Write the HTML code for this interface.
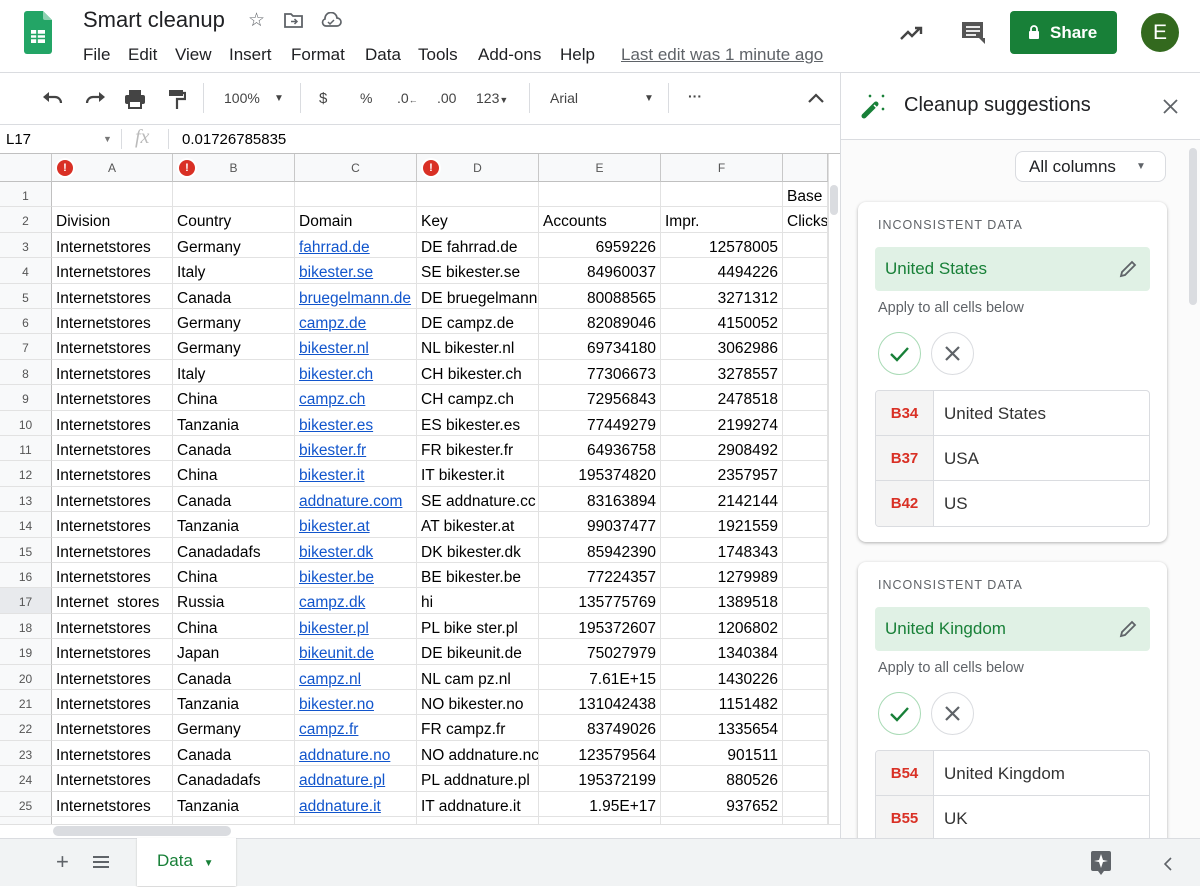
<!DOCTYPE html>
<html><head><meta charset="utf-8"><style>
*{box-sizing:border-box;margin:0;padding:0}
body{width:1200px;height:886px;overflow:hidden;background:#fff;font-family:"Liberation Sans",Arial,sans-serif;position:relative;color:#000}
.abs{position:absolute}
.menu span{position:absolute;top:0;white-space:nowrap}
.tb{position:absolute;top:90px;font-size:14px;color:#444}
#grid{position:absolute;left:0;top:154px;width:828px;height:670px;overflow:hidden}
.hdr{position:absolute;top:0;height:28px;background:#f8f9fa;border-right:1px solid #c8c8c8;border-bottom:1px solid #c0c0c0;font-size:12px;color:#555;text-align:center;line-height:28px}
.row{position:absolute;left:0;height:25.4px;width:828px}
.c{position:absolute;top:0;height:100%;border-right:1px solid #e2e2e2;border-bottom:1px solid #e2e2e2;font-size:15.5px;line-height:25px;padding:2px 4px 0;white-space:nowrap;overflow:hidden}
.rh{background:#f8f9fa;color:#555;font-size:12px;text-align:center;border-right:1px solid #c0c0c0}
.r{text-align:right}
.l{color:#1155cc;text-decoration:underline}
.err{position:absolute;top:6px;width:16px;height:16px;border-radius:50%;background:#d93025;color:#fff;font-size:11px;font-weight:bold;line-height:16px;text-align:center;box-shadow:0 0 0 2px #fff}
.card{position:absolute;left:858px;width:309px;background:#fff;border-radius:8px;box-shadow:0 1px 3px rgba(0,0,0,.3)}
.cap{position:absolute;left:20px;font-size:12.5px;letter-spacing:1px;color:#5f6368}
.sug{position:absolute;left:17px;width:275px;height:44px;background:#e0f1e5;border-radius:4px;color:#188038;font-size:17px;line-height:44px;padding-left:10px}
.app{position:absolute;left:20px;font-size:14.5px;color:#5f6368}
.btn{position:absolute;width:43px;height:43px;border-radius:50%;border:1px solid #dadce0}
.lst{position:absolute;left:17px;width:275px;border:1px solid #dadce0;border-radius:4px;overflow:hidden}
.li{height:45px;border-bottom:1px solid #dadce0;display:flex}
.li b{width:58px;background:#f4f4f4;border-right:1px solid #dadce0;color:#d93025;font-size:15px;text-align:center;line-height:45px}
.li span{padding-left:10px;font-size:17px;color:#333;line-height:45px}
</style></head><body>
<svg class="abs" style="left:24px;top:11px" width="28" height="43" viewBox="0 0 28 43"><path d="M3 0h16l9 9v31a3 3 0 0 1-3 3H3a3 3 0 0 1-3-3V3a3 3 0 0 1 3-3z" fill="#23a566"/><path d="M19 0l9 9h-7a2 2 0 0 1-2-2z" fill="#8ed1b1"/><rect x="7" y="19" width="14" height="13" fill="#fff"/><path d="M7 23.5h14M7 27.5h14M13 19v13" stroke="#23a566" stroke-width="1.6"/></svg>
<div class="abs" style="left:83px;top:7px;font-size:22px;color:#202124">Smart cleanup</div>
<div class="abs" style="left:248px;top:9px;font-size:19px;color:#5f6368">☆</div>
<svg class="abs" style="left:284px;top:12px" width="20" height="16"><path d="M1 2h6l2 2h9v11H1z" fill="none" stroke="#5f6368" stroke-width="1.8"/><path d="M7 9.5h6M10.5 7l2.5 2.5-2.5 2.5" fill="none" stroke="#5f6368" stroke-width="1.5"/></svg>
<svg class="abs" style="left:320px;top:12px" width="22" height="16"><path d="M6 14h11a4 4 0 0 0 0-8A6 6 0 0 0 5 7a3.6 3.6 0 0 0 1 7z" fill="none" stroke="#5f6368" stroke-width="1.7"/><path d="M8 10l2 2 4-4" fill="none" stroke="#5f6368" stroke-width="1.5"/></svg>
<div class="abs menu" style="left:0;top:45px;font-size:17px;color:#202124"><span style="left:83px">File</span><span style="left:128px">Edit</span><span style="left:175px">View</span><span style="left:229px">Insert</span><span style="left:291px">Format</span><span style="left:365px">Data</span><span style="left:418px">Tools</span><span style="left:478px">Add-ons</span><span style="left:560px">Help</span></div>
<div class="abs" style="left:621px;top:45px;font-size:17px;color:#5f6368;text-decoration:underline">Last edit was 1 minute ago</div>
<svg class="abs" style="left:899px;top:24px" width="26" height="18"><path d="M2 15l7-7 4 4 8-8M16 4h6v6" fill="none" stroke="#444" stroke-width="2.4"/></svg>
<svg class="abs" style="left:961px;top:21px" width="24" height="24"><path d="M1 1h21v16h2l0 6-6-6H1z" fill="#555"/><path d="M5 6h14M5 10h14M5 14h10" stroke="#fff" stroke-width="1.8"/></svg>
<div class="abs" style="left:1010px;top:11px;width:107px;height:43px;background:#188038;border-radius:4px;color:#fff;font-size:17px;line-height:43px;padding-left:40px;font-weight:bold">Share</div>
<svg class="abs" style="left:1028px;top:25px" width="12" height="14"><rect x="1" y="6" width="10" height="8" rx="1" fill="#fff"/><path d="M3 6V4a3 3 0 0 1 6 0v2" fill="none" stroke="#fff" stroke-width="1.8"/></svg>
<div class="abs" style="left:1141px;top:13px;width:38px;height:39px;border-radius:50%;background:#33691e;color:#fff;font-size:21px;text-align:center;line-height:39px">E</div>
<div class="abs" style="left:0;top:72px;width:1200px;height:1px;background:#dadce0"></div>
<svg class="abs" style="left:42px;top:91px" width="22" height="14"><path d="M4 6h9a6 6 0 0 1 6 6" fill="none" stroke="#444" stroke-width="2.2"/><path d="M1 6l6-5v10z" fill="#444"/></svg>
<svg class="abs" style="left:84px;top:91px" width="22" height="14"><path d="M18 6H9a6 6 0 0 0-6 6" fill="none" stroke="#444" stroke-width="2.2"/><path d="M21 6l-6-5v10z" fill="#444"/></svg>
<svg class="abs" style="left:124px;top:89px" width="22" height="20"><rect x="5" y="1" width="12" height="5" fill="#444"/><rect x="1" y="6" width="20" height="9" rx="2" fill="#444"/><rect x="5" y="12" width="12" height="7" fill="#fff" stroke="#444" stroke-width="2"/></svg>
<svg class="abs" style="left:168px;top:89px" width="18" height="21"><rect x="1" y="1" width="14" height="6" fill="#444"/><path d="M15 4h2v6H9v10" fill="none" stroke="#444" stroke-width="2.2"/></svg>
<div class="abs" style="left:203px;top:83px;width:1px;height:30px;background:#dadce0"></div>
<div class="tb" style="left:224px">100%</div><div class="tb" style="left:274px;font-size:10px;top:93px">▼</div>
<div class="abs" style="left:300px;top:83px;width:1px;height:30px;background:#dadce0"></div>
<div class="tb" style="left:319px;font-size:15px">$</div><div class="tb" style="left:360px">%</div>
<div class="tb" style="left:397px">.0<span style="font-size:9px">←</span></div><div class="tb" style="left:437px">.00</div>
<div class="tb" style="left:476px">123<span style="font-size:9px">▼</span></div>
<div class="abs" style="left:529px;top:83px;width:1px;height:30px;background:#dadce0"></div>
<div class="tb" style="left:550px">Arial</div><div class="tb" style="left:644px;font-size:10px;top:93px">▼</div>
<div class="abs" style="left:668px;top:83px;width:1px;height:30px;background:#dadce0"></div>
<div class="tb" style="left:688px;font-weight:bold;top:88px">···</div>
<svg class="abs" style="left:808px;top:93px" width="16" height="10"><path d="M1 9l7-7 7 7" fill="none" stroke="#444" stroke-width="2.2"/></svg>
<div class="abs" style="left:0;top:124px;width:841px;height:1px;background:#dadce0"></div>
<div class="abs" style="left:6px;top:131px;font-size:15px">L17</div>
<div class="abs" style="left:103px;top:134px;font-size:9px;color:#777">▼</div>
<div class="abs" style="left:121px;top:129px;width:1px;height:20px;background:#dadce0"></div>
<div class="abs" style="left:135px;top:126px;font-size:20px;color:#bbb;font-style:italic;font-family:'Liberation Serif',serif">fx</div>
<div class="abs" style="left:168px;top:129px;width:1px;height:20px;background:#dadce0"></div>
<div class="abs" style="left:182px;top:131px;font-size:15px">0.01726785835</div>
<div class="abs" style="left:0;top:153px;width:841px;height:1px;background:#c0c0c0"></div>
<div id="grid">
<div class="hdr" style="left:0;width:52px"></div>
<div class="hdr" style="left:52px;width:121px">A</div>
<div class="hdr" style="left:173px;width:122px">B</div>
<div class="hdr" style="left:295px;width:122px">C</div>
<div class="hdr" style="left:417px;width:122px">D</div>
<div class="hdr" style="left:539px;width:122px">E</div>
<div class="hdr" style="left:661px;width:122px">F</div>
<div class="hdr" style="left:783px;width:45px"></div>
<div class="err" style="left:57px">!</div><div class="err" style="left:179px">!</div><div class="err" style="left:423px">!</div>
<div id="rows" style="position:absolute;left:0;top:28px;width:828px"></div>
</div>
<div class="abs" style="left:828px;top:154px;width:13px;height:684px;background:#fff;border-left:1px solid #e0e0e0"></div>
<div class="abs" style="left:830px;top:185px;width:8px;height:30px;background:#dadce0;border-radius:4px"></div>
<div class="abs" style="left:0;top:824px;width:841px;height:14px;background:#fff;border-top:1px solid #e0e0e0"></div>
<div class="abs" style="left:53px;top:826px;width:178px;height:10px;background:#dadce0;border-radius:5px"></div>
<div class="abs" style="left:840px;top:72px;width:1px;height:766px;background:#dadce0"></div>
<div class="abs" style="left:841px;top:73px;width:359px;height:765px;background:#fbfbfb"></div>
<div class="abs" style="left:841px;top:73px;width:359px;height:67px;background:#fff;border-bottom:1px solid #dadce0"></div>
<svg class="abs" style="left:861px;top:94px" width="28" height="26"><path d="M3 22L15 10" stroke="#188038" stroke-width="5" stroke-linecap="round"/><path d="M13 11l3 3" stroke="#fff" stroke-width="1.5"/><path d="M8 1l2 2M10 1l-2 2M21 1l2 2M23 1l-2 2M21 14l2 2M23 14l-2 2" stroke="#188038" stroke-width="1.3"/></svg>
<div class="abs" style="left:904px;top:94px;font-size:20px;color:#202124">Cleanup suggestions</div>
<svg class="abs" style="left:1163px;top:99px" width="15" height="15"><path d="M1 1l13 13M14 1L1 14" stroke="#5f6368" stroke-width="1.8"/></svg>
<div class="abs" style="left:1015px;top:151px;width:151px;height:31px;border:1px solid #dadce0;border-radius:8px;background:#fff;font-size:17px;line-height:29px;padding-left:13px;color:#202124">All columns<span style="position:absolute;left:120px;font-size:10px;color:#5f6368">▼</span></div>
<div class="abs" style="left:1189px;top:148px;width:8px;height:157px;background:#dadce0;border-radius:4px"></div>
<div class="card" style="top:202px;height:340px">
<div class="cap" style="top:16px">INCONSISTENT DATA</div>
<div class="sug" style="top:45px">United States</div>
<svg class="abs" style="left:260px;top:57px" width="20" height="20"><path d="M3 17l1-4L14 3l3 3L7 16z" fill="none" stroke="#5f6368" stroke-width="1.8"/></svg>
<div class="app" style="top:98px">Apply to all cells below</div>
<div class="btn" style="left:20px;top:130px;border-color:#a8dab5"><svg width="41" height="41"><path d="M12 21l6 6 11-12" fill="none" stroke="#188038" stroke-width="2.4"/></svg></div>
<div class="btn" style="left:73px;top:130px"><svg width="41" height="41"><path d="M14 14l13 13M27 14L14 27" stroke="#5f6368" stroke-width="2.2"/></svg></div>
<div class="lst" style="top:188px"><div class="li"><b>B34</b><span>United States</span></div><div class="li"><b>B37</b><span>USA</span></div><div class="li" style="border:0"><b>B42</b><span>US</span></div></div>
</div>
<div class="card" style="top:562px;height:300px">
<div class="cap" style="top:16px">INCONSISTENT DATA</div>
<div class="sug" style="top:45px">United Kingdom</div>
<svg class="abs" style="left:260px;top:57px" width="20" height="20"><path d="M3 17l1-4L14 3l3 3L7 16z" fill="none" stroke="#5f6368" stroke-width="1.8"/></svg>
<div class="app" style="top:98px">Apply to all cells below</div>
<div class="btn" style="left:20px;top:130px;border-color:#a8dab5"><svg width="41" height="41"><path d="M12 21l6 6 11-12" fill="none" stroke="#188038" stroke-width="2.4"/></svg></div>
<div class="btn" style="left:73px;top:130px"><svg width="41" height="41"><path d="M14 14l13 13M27 14L14 27" stroke="#5f6368" stroke-width="2.2"/></svg></div>
<div class="lst" style="top:188px"><div class="li"><b>B54</b><span>United Kingdom</span></div><div class="li"><b>B55</b><span>UK</span></div></div>
</div>
<div class="abs" style="left:0;top:838px;width:1200px;height:48px;background:#f1f3f4;border-top:1px solid #dadce0"></div>
<div class="abs" style="left:56px;top:849px;font-size:22px;color:#5f6368">+</div>
<svg class="abs" style="left:93px;top:855px" width="16" height="14"><path d="M0 2h16M0 7h16M0 12h16" stroke="#5f6368" stroke-width="2"/></svg>
<div class="abs" style="left:137px;top:838px;width:99px;height:48px;background:#fff;box-shadow:0 1px 2px rgba(0,0,0,.2);color:#188038;font-size:17px;line-height:46px;padding-left:20px">Data <span style="font-size:10px;margin-left:6px">▼</span></div>
<svg class="abs" style="left:1091px;top:851px" width="20" height="24"><path d="M2 0h16a2 2 0 0 1 2 2v16a2 2 0 0 1-2 2h-5l-3 4-3-4H2a2 2 0 0 1-2-2V2a2 2 0 0 1 2-2z" fill="#5f6368"/><path d="M10 3l2 6 5 1-5 1-2 6-2-6-5-1 5-1z" fill="#fff"/></svg>
<svg class="abs" style="left:1164px;top:857px" width="8" height="14"><path d="M7 1L1 7l6 6" fill="none" stroke="#5f6368" stroke-width="1.6"/></svg>
<script>
var D=[["",""," "," ","","","Base"],["Division","Country","Domain","Key","Accounts","Impr.","Clicks"],
["Internetstores","Germany","fahrrad.de","DE fahrrad.de","6959226","12578005"],
["Internetstores","Italy","bikester.se","SE bikester.se","84960037","4494226"],
["Internetstores","Canada","bruegelmann.de","DE bruegelmann","80088565","3271312"],
["Internetstores","Germany","campz.de","DE campz.de","82089046","4150052"],
["Internetstores","Germany","bikester.nl","NL bikester.nl","69734180","3062986"],
["Internetstores","Italy","bikester.ch","CH bikester.ch","77306673","3278557"],
["Internetstores","China","campz.ch","CH campz.ch","72956843","2478518"],
["Internetstores","Tanzania","bikester.es","ES bikester.es","77449279","2199274"],
["Internetstores","Canada","bikester.fr","FR bikester.fr","64936758","2908492"],
["Internetstores","China","bikester.it","IT bikester.it","195374820","2357957"],
["Internetstores","Canada","addnature.com","SE addnature.cc","83163894","2142144"],
["Internetstores","Tanzania","bikester.at","AT bikester.at","99037477","1921559"],
["Internetstores","Canadadafs","bikester.dk","DK bikester.dk","85942390","1748343"],
["Internetstores","China","bikester.be","BE bikester.be","77224357","1279989"],
["Internet&nbsp; stores","Russia","campz.dk","hi","135775769","1389518"],
["Internetstores","China","bikester.pl","PL bike ster.pl","195372607","1206802"],
["Internetstores","Japan","bikeunit.de","DE bikeunit.de","75027979","1340384"],
["Internetstores","Canada","campz.nl","NL cam pz.nl","7.61E+15","1430226"],
["Internetstores","Tanzania","bikester.no","NO bikester.no","131042438","1151482"],
["Internetstores","Germany","campz.fr","FR campz.fr","83749026","1335654"],
["Internetstores","Canada","addnature.no","NO addnature.nc","123579564","901511"],
["Internetstores","Canadadafs","addnature.pl","PL addnature.pl","195372199","880526"],
["Internetstores","Tanzania","addnature.it","IT addnature.it","1.95E+17","937652"],
["Internetstores","Germany","addnature.de","AT campz.at","79004035","793404"]];
var L=[52,173,295,417,539,661,783],W=[121,122,122,122,122,122,45],h="";
for(var i=0;i<D.length;i++){var r=D[i];h+='<div class="row" style="top:'+(i*25.4)+'px"><div class="c rh" style="left:0;width:52px;'+(i==16?'background:#e8eaed;':'')+'">'+(i+1)+'</div>';
for(var j=0;j<7;j++){var t=r[j]||"",cl="c";if(i>1&&(j==4||j==5))cl+=" r";if(i>1&&j==2)t='<span class="l">'+t+'</span>';h+='<div class="'+cl+'" style="left:'+L[j]+'px;width:'+W[j]+'px">'+t+'</div>';}
h+='</div>';}
document.getElementById("rows").innerHTML=h;
</script>
</body></html>
